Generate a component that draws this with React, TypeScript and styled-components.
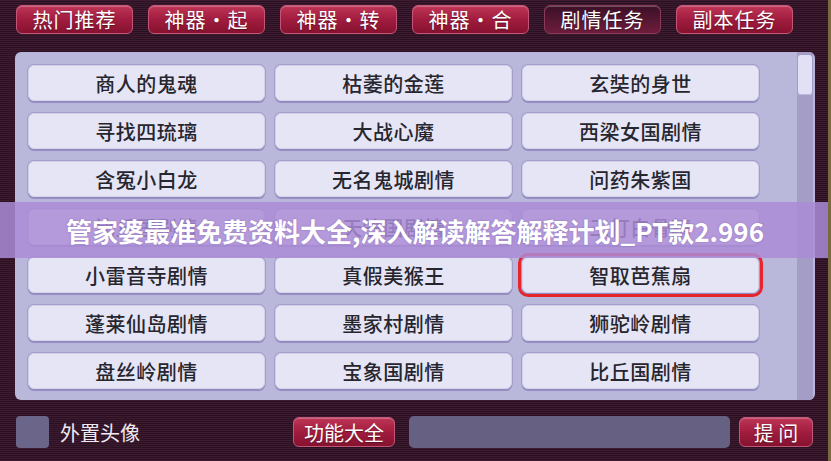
import styled, { createGlobalStyle, css } from 'styled-components';

const GlobalStyle = createGlobalStyle`
  html, body {
    margin: 0;
    padding: 0;
  }
  body {
    font-family: "Noto Sans CJK SC", "Noto Sans", sans-serif;
  }
`;

//Styled components
const Screen = styled.div`
  position: relative;
  width: 831px;
  height: 461px;
  box-sizing: border-box;
  overflow: hidden;
  display: flex;
  flex-direction: column;
  border-right: 3px solid #7a6a40;
  background: repeating-linear-gradient(
    to bottom,
    #3f1b32 0px,
    #3f1b32 1px,
    #2a1121 1px,
    #2a1121 2px
  );
`;

const TabBar = styled.div`
  display: flex;
  gap: 15px;
  padding: 5px 0 0 16px;
`;

const redButton = css`
  box-sizing: border-box;
  display: flex;
  align-items: center;
  justify-content: center;
  color: #fff;
  border: 1px solid #c35677;
  border-radius: 6px;
  background: linear-gradient(to bottom, #be3556 0%, #a11c3f 50%, #86122f 100%);
  box-shadow: inset 0 1px 0 rgba(255, 255, 255, 0.25);
  text-shadow: 0 1px 1px rgba(0, 0, 0, 0.35);
`;

const Tab = styled.div<{ $active?: boolean }>`
  ${redButton}
  width: 117px;
  height: 29px;
  font-size: 20px;
  letter-spacing: 1px;
  ${({ $active }) =>
    $active &&
    css`
      background: linear-gradient(to bottom, #3a1027 0%, #5a1834 60%, #6e1c3c 100%);
      border-color: #8a3a58;
    `}
`;

const Panel = styled.div`
  margin: 18px 0 0 15px;
  width: 800px;
  height: 348px;
  box-sizing: border-box;
  border-radius: 6px;
  background: #b9b7da;
  display: flex;
  overflow: hidden;
`;

const Grid = styled.div`
  flex: 1;
  display: grid;
  grid-template-columns: repeat(3, 237px);
  grid-auto-rows: 36px;
  column-gap: 10px;
  row-gap: 12px;
  padding: 13px 0 0 13px;
`;

const Item = styled.div<{ $picked?: boolean }>`
  position: relative;
  box-sizing: border-box;
  display: flex;
  align-items: center;
  justify-content: center;
  border-radius: 6px;
  background: #e6e5f6;
  border: 1px solid #d4d0ea;
  box-shadow: 0 2px 0 #948dc0, 0 0 0 1px #a39dcb;
  color: #26262f;
  font-size: 20px;
  font-weight: 500;
  letter-spacing: 0.5px;
  ${({ $picked }) =>
    $picked &&
    css`
      outline: 3px solid #e8242b;
      outline-offset: 1px;
    `}
`;

const ScrollTrack = styled.div`
  width: 16px;
  margin-right: 2px;
  background: #a49dc6;
  display: flex;
  flex-direction: column;
  padding: 3px 1px 0;
  box-sizing: border-box;
`;

const ScrollThumb = styled.div`
  height: 40px;
  border-radius: 3px;
  background: #e2e0f4;
  box-shadow: inset 0 -1px 0 #bdb8dc;
`;

const BottomBar = styled.div`
  display: flex;
  align-items: center;
  height: 32px;
  margin-top: 16px;
  padding-left: 16px;
`;

const CheckBox = styled.div`
  width: 33px;
  height: 32px;
  border-radius: 4px;
  background: #6a6589;
`;

const Label = styled.span`
  margin-left: 11px;
  color: #eeeaf2;
  font-size: 20px;
  width: 233px;
`;

const ActionButton = styled.div<{ $w: number }>`
  ${redButton}
  width: ${({ $w }) => $w}px;
  height: 30px;
  font-size: 20px;
`;

const QuestionInput = styled.div`
  width: 321px;
  height: 32px;
  margin: 0 9px 0 14px;
  border-radius: 5px;
  background: #666082;
`;

const Banner = styled.div`
  position: absolute;
  left: 0;
  right: 0;
  top: 202px;
  height: 56px;
  display: flex;
  align-items: center;
  justify-content: center;
  background: rgba(170, 140, 214, 0.85);
  color: #fff;
  font-size: 26px;
  font-weight: 700;
  padding-left: 2px;
  text-shadow: 0 0 2px rgba(90, 60, 130, 0.4);
`;

const items = [
  '商人的鬼魂', '枯萎的金莲', '玄奘的身世',
  '寻找四琉璃', '大战心魔', '西梁女国剧情',
  '含冤小白龙', '无名鬼城剧情', '问药朱紫国',
  '比丘国剧情', '天竺国剧情', '三打白骨精',
  '小雷音寺剧情', '真假美猴王', '智取芭蕉扇',
  '蓬莱仙岛剧情', '墨家村剧情', '狮驼岭剧情',
  '盘丝岭剧情', '宝象国剧情', '比丘国剧情',
];

const tabs = ['热门推荐', '神器・起', '神器・转', '神器・合', '剧情任务', '副本任务'];

export default function App() {
  return (
    <>
      <GlobalStyle />
      <Screen>
        <TabBar>
          {tabs.map((t) => (
            <Tab key={t} $active={t === '剧情任务'}>
              {t}
            </Tab>
          ))}
        </TabBar>
        <Panel>
          <Grid>
            {items.map((name, i) => (
              <Item key={i} $picked={name === '智取芭蕉扇'}>
                {name}
              </Item>
            ))}
          </Grid>
          <ScrollTrack>
            <ScrollThumb />
          </ScrollTrack>
        </Panel>
        <BottomBar>
          <CheckBox />
          <Label>外置头像</Label>
          <ActionButton $w={102}>功能大全</ActionButton>
          <QuestionInput />
          <ActionButton $w={74}>提 问</ActionButton>
        </BottomBar>
        <Banner>管家婆最准免费资料大全,深入解读解答解释计划_PT款2.996</Banner>
      </Screen>
    </>
  );
}
